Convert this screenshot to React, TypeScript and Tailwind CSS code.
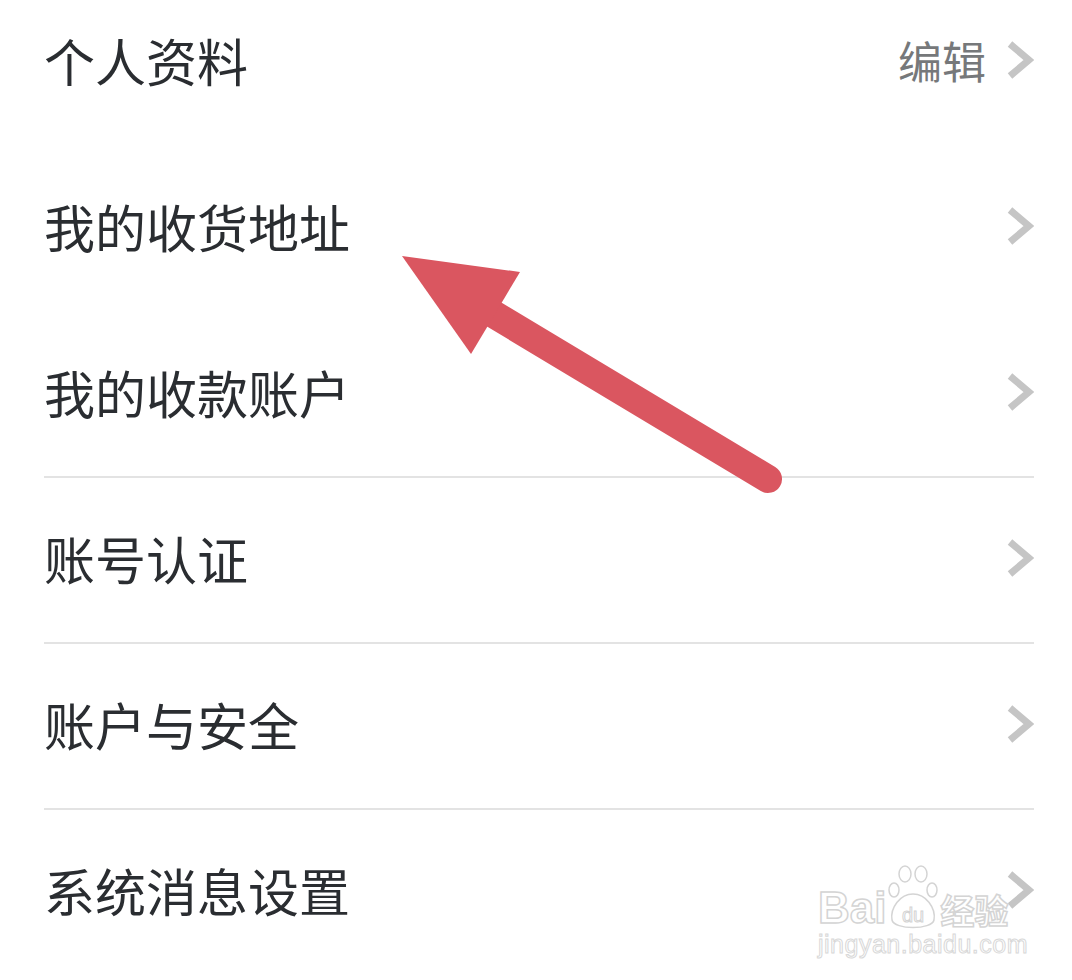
import React from 'react';

const items = [
  { label: '个人资料', extra: '编辑', line: false },
  { label: '我的收货地址', line: false },
  { label: '我的收款账户', line: true },
  { label: '账号认证', line: true },
  { label: '账户与安全', line: true },
  { label: '系统消息设置', line: false },
];

function Chevron() {
  return (
    <svg width="28" height="40" viewBox="0 0 28 40" className="shrink-0">
      <polyline points="4,4 23,20 4,36" fill="none" stroke="#c5c5c5" strokeWidth="7" />
    </svg>
  );
}

export default function App() {
  return (
    <div
      className="relative w-[1072px] h-[980px] overflow-hidden bg-white"
      style={{ fontFamily: '"Noto Sans CJK SC", "Noto Sans", sans-serif' }}
    >
      {/* List */}
      <div className="pl-[44px] pr-[38px]">
        {items.map((it, i) => (
          <div
            key={it.label}
            className={`flex items-center justify-between pb-[59px] border-b-2 ${
              i === 0 ? 'pt-[35px]' : 'pt-[55px]'
            } ${it.line ? 'border-[#e3e3e3]' : 'border-transparent'}`}
          >
            <span className="text-[51px] leading-[50px] text-[#2a2d31]">{it.label}</span>
            <div className="flex items-center gap-[20px]">
              {it.extra && (
                <span className="text-[44px] leading-[50px] text-[#76787a]">{it.extra}</span>
              )}
              <Chevron />
            </div>
          </div>
        ))}
      </div>

      {/* Red arrow annotation */}
      <svg className="absolute left-0 top-0 pointer-events-none" width="1072" height="980">
        <line x1="490" y1="312" x2="768" y2="479" stroke="#da5660" strokeWidth="28" strokeLinecap="round" />
        <polygon points="402,256 520,272 471,354" fill="#da5660" />
      </svg>

      {/* Watermark */}
      <div className="absolute left-[818px] top-[860px] pointer-events-none select-none">
        <div className="flex items-end">
          <span
            className="text-[44px] leading-[44px] font-bold text-white [-webkit-text-stroke:1.5px_#d4d4d4]"
            style={{ fontFamily: '"Liberation Sans", Arial, sans-serif' }}
          >
            Bai
          </span>
          <svg width="54" height="72" viewBox="0 0 54 72" className="-mb-[2px]">
            <g fill="white" stroke="#d4d4d4" strokeWidth="1.5">
              <ellipse cx="8" cy="30" rx="5" ry="7" />
              <ellipse cx="19" cy="14" rx="6" ry="8" />
              <ellipse cx="35" cy="14" rx="6" ry="8" />
              <ellipse cx="46" cy="30" rx="5" ry="7" />
              <path d="M27 34 C14 34 4 48 6 60 C8 70 46 70 48 60 C50 48 40 34 27 34 Z" />
            </g>
            <text
              x="27"
              y="62"
              textAnchor="middle"
              fontSize="20"
              fontFamily="Liberation Sans, Arial, sans-serif"
              fill="white"
              stroke="#d4d4d4"
              strokeWidth="1"
            >
              du
            </text>
          </svg>
          <span className="text-[34px] leading-[40px] font-bold text-white [-webkit-text-stroke:1.5px_#d4d4d4]">
            经验
          </span>
        </div>
        <div
          className="text-[25px] leading-[28px] text-white [-webkit-text-stroke:1px_#d8d8d8] tracking-[0.5px]"
          style={{ fontFamily: '"Liberation Sans", Arial, sans-serif' }}
        >
          jingyan.baidu.com
        </div>
      </div>
    </div>
  );
}
